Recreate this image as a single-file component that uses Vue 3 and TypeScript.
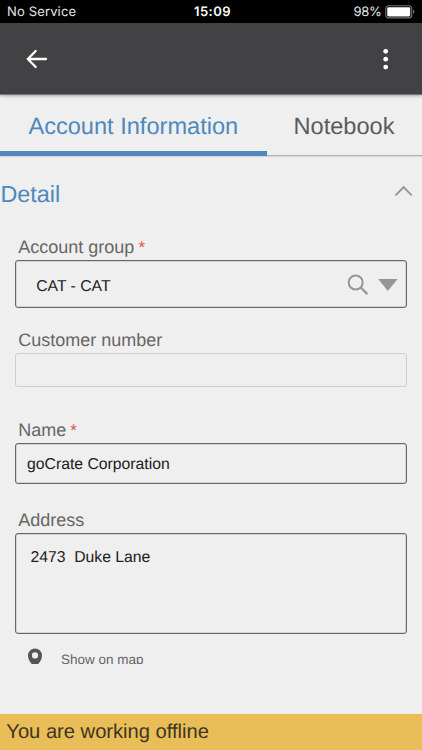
<script setup lang="ts">
import { ref } from 'vue'

const tabs = ['Account Information', 'Notebook']
const active = ref(0)
const expanded = ref(true)
const group = 'CAT - CAT'
const customerNumber = ref('')
const name = ref('goCrate Corporation')
const address = ref('2473  Duke Lane')
</script>

<template>
  <div class="screen">
    <div class="status">
      <span class="carrier">No Service</span>
      <span class="time">15:09</span>
      <span class="power">
        <span class="pct">98%</span>
        <svg width="30" height="14" viewBox="0 0 30 14">
          <rect x="0.7" y="0.7" width="26" height="12.2" rx="3" fill="none" stroke="#777" stroke-width="1.1" />
          <rect x="2.2" y="2.2" width="23" height="9.2" rx="1.4" fill="#fff" />
          <path d="M28 4.8 Q29.4 5.3 29.4 6.8 T28 8.8Z" fill="#777" />
        </svg>
      </span>
    </div>

    <header class="appbar">
      <svg class="back" width="24" height="22" viewBox="0 0 24 22">
        <path d="M21 11H2.8M10.7 3L2.8 11l7.9 8" fill="none" stroke="#fff" stroke-width="2.3" stroke-linecap="round" stroke-linejoin="round" />
      </svg>
      <svg class="more" width="8" height="24" viewBox="0 0 8 24">
        <circle cx="3.7" cy="4.3" r="2.4" fill="#fff" />
        <circle cx="3.7" cy="12.2" r="2.4" fill="#fff" />
        <circle cx="3.7" cy="20.1" r="2.4" fill="#fff" />
      </svg>
    </header>

    <nav class="tabs">
      <div v-for="(tab, i) in tabs" :key="tab" class="tab" :class="{ active: active === i }" @click="active = i">{{ tab }}</div>
    </nav>

    <main class="content">
      <div class="section" @click="expanded = !expanded">
        <span>Detail</span>
        <svg width="20" height="14" viewBox="0 0 20 14">
          <path d="M1.5 11.4L9.6 3.2l8.1 8.2" fill="none" stroke="#949494" stroke-width="1.9" />
        </svg>
      </div>

      <div v-show="expanded" class="form">
        <label class="label">Account group<i>*</i></label>
        <div class="box select">
          <span>{{ group }}</span>
          <svg class="lens" width="22" height="22" viewBox="0 0 22 22">
            <circle cx="8.7" cy="8.5" r="7" fill="none" stroke="#969696" stroke-width="2" />
            <path d="M13.7 13.5l6.7 6.6" fill="none" stroke="#969696" stroke-width="2.3" />
          </svg>
          <svg class="caret" width="20" height="12" viewBox="0 0 20 12">
            <path d="M0.2 0H19.6L9.9 12Z" fill="#959595" />
          </svg>
        </div>

        <label class="label second">Customer number</label>
        <div class="box readonly">{{ customerNumber }}</div>

        <label class="label third">Name<i>*</i></label>
        <div class="box name">{{ name }}</div>

        <label class="label fourth">Address</label>
        <div class="box address">{{ address }}</div>

        <div class="maplink">
          <svg width="16" height="20" viewBox="0 0 16 20">
            <path fill-rule="evenodd" d="M8 0.4A7 7 0 0 0 1 7.4C1 12 4 15 8 20C12 15 15 12 15 7.4A7 7 0 0 0 8 0.4ZM8 4.3A3.1 3.1 0 1 1 8 10.5A3.1 3.1 0 0 1 8 4.3Z" fill="#555" />
          </svg>
          <span>Show on map</span>
        </div>
      </div>
    </main>

    <footer class="offline">You are working offline</footer>
  </div>
</template>

<style>
body {
  margin: 0;
  background: #efefef;
}
</style>

<style scoped>
.screen {
  box-sizing: border-box;
  width: 422px;
  height: 750px;
  display: flex;
  flex-direction: column;
  overflow: hidden;
  background: #efefef;
  font-family: "Liberation Sans", Arial, sans-serif;
  text-rendering: geometricPrecision;
}
.screen * {
  box-sizing: border-box;
}
svg {
  display: block;
  flex: none;
}
.status {
  flex: none;
  height: 23px;
  display: grid;
  grid-template-columns: 1fr auto 1fr;
  align-items: center;
  padding: 1px 7px 0;
  background: #000;
  color: #e6e6e6;
  font: 13px/22px Inter, sans-serif;
}
.carrier {
  letter-spacing: 0.15px;
}
.time {
  color: #fff;
  font-weight: 600;
  letter-spacing: 0.5px;
  padding-left: 3px;
}
.pct {
  letter-spacing: -0.3px;
}
.power {
  display: flex;
  justify-content: flex-end;
  align-items: center;
  gap: 3.5px;
}
.appbar {
  flex: none;
  height: 72px;
  display: flex;
  justify-content: space-between;
  align-items: center;
  padding: 0 32px 0 25px;
  background: #424245;
  border-bottom: 1px solid #77777a;
  box-shadow: 0 1px 3px rgba(0, 0, 0, 0.3);
}
.tabs {
  flex: none;
  height: 61px;
  display: flex;
  border-bottom: 1px solid #b3b3b3;
  box-shadow: 0 1px 1px rgba(0, 0, 0, 0.1);
}
.tab {
  height: 61px;
  padding-left: 27px;
  color: #5b5b5b;
  font-size: 23.6px;
  line-height: 64px;
  white-space: nowrap;
}
.tab.active {
  width: 266.5px;
  padding-left: 28.4px;
  color: #4e88bd;
  border-bottom: 5px solid #4e88bd;
}
.content {
  flex: none;
  height: 508px;
  overflow: hidden;
}
.section {
  height: 76px;
  display: flex;
  justify-content: space-between;
  align-items: center;
  padding: 0 8px 0 0.4px;
  color: #4e88bd;
  font-size: 23.4px;
}
.section svg {
  margin-top: -6px;
}
.form {
  padding: 0 15px;
}
.label {
  display: block;
  height: 28px;
  padding: 2px 0 0 3.3px;
  color: #666;
  font-size: 18px;
  line-height: 26px;
}
.label i {
  margin-left: 4px;
  color: #e05252;
  font-style: normal;
  font-size: 17px;
}
.second {
  margin-top: 17px;
}
.third {
  margin-top: 28px;
}
.fourth {
  margin-top: 21px;
}
.box {
  width: 392px;
  border: 1px solid #666;
  box-shadow: inset 0 0 0 0.5px rgba(90, 90, 90, 0.35);
  border-radius: 3px;
  color: #202020;
  font-size: 15.75px;
  white-space: pre;
}
.select {
  height: 48px;
  display: flex;
  align-items: center;
  padding: 3px 8px 0 20.2px;
}
.select span {
  padding-top: 2px;
}
.lens {
  margin: -2px 9px 0 auto;
}
.caret {
  margin-top: -2px;
}
.readonly {
  height: 34px;
  border-color: #cecece;
  box-shadow: none;
}
.name {
  height: 41px;
  padding-left: 11px;
  line-height: 41px;
}
.address {
  height: 101px;
  padding: 13px 14.4px;
  line-height: 22px;
}
.maplink {
  height: 30px;
  display: flex;
  overflow: hidden;
  padding: 14px 0 0 12px;
  color: #666;
  font-size: 13.5px;
  line-height: 23px;
}
.maplink span {
  margin-left: 18px;
}
.offline {
  flex: none;
  height: 36px;
  margin-top: auto;
  padding-left: 6.3px;
  background: #e9bd58;
  color: #3d3622;
  font-size: 20.15px;
  line-height: 36px;
}
</style>
